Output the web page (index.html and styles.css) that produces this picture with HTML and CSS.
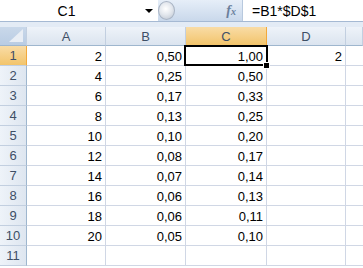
FILE: index.html
```html
<!DOCTYPE html>
<html lang="en">

<head>
    <meta charset="UTF-8">
    <title>Sheet</title>
    <link rel="stylesheet" href="styles.css">
</head>

<body>
    <div class="app">
        <div class="fbar">
            <div class="namebox">
                <span class="name">C1</span>
                <span class="arrow"></span>
            </div>
            <div class="fxzone">
                <span class="bead"></span>
                <span class="fx">f<small>x</small></span>
            </div>
            <div class="formula">=B1*$D$1</div>
        </div>
        <div class="gap"></div>
        <div class="grid">
            <div class="hd corner"><span class="tri"></span></div>
            <div class="hd">A</div>
            <div class="hd">B</div>
            <div class="hd sel">C</div>
            <div class="hd">D</div>
            <div class="hd last"></div>

            <div class="rh sel">1</div>
            <div class="c">2</div>
            <div class="c">0,50</div>
            <div class="c active">1,00<span class="frame"></span><span class="handle"></span></div>
            <div class="c">2</div>
            <div class="c last"></div>

            <div class="rh">2</div><div class="c">4</div><div class="c">0,25</div><div class="c">0,50</div><div class="c"></div><div class="c last"></div>
            <div class="rh">3</div><div class="c">6</div><div class="c">0,17</div><div class="c">0,33</div><div class="c"></div><div class="c last"></div>
            <div class="rh">4</div><div class="c">8</div><div class="c">0,13</div><div class="c">0,25</div><div class="c"></div><div class="c last"></div>
            <div class="rh">5</div><div class="c">10</div><div class="c">0,10</div><div class="c">0,20</div><div class="c"></div><div class="c last"></div>
            <div class="rh">6</div><div class="c">12</div><div class="c">0,08</div><div class="c">0,17</div><div class="c"></div><div class="c last"></div>
            <div class="rh">7</div><div class="c">14</div><div class="c">0,07</div><div class="c">0,14</div><div class="c"></div><div class="c last"></div>
            <div class="rh">8</div><div class="c">16</div><div class="c">0,06</div><div class="c">0,13</div><div class="c"></div><div class="c last"></div>
            <div class="rh">9</div><div class="c">18</div><div class="c">0,06</div><div class="c">0,11</div><div class="c"></div><div class="c last"></div>
            <div class="rh">10</div><div class="c">20</div><div class="c">0,05</div><div class="c">0,10</div><div class="c"></div><div class="c last"></div>
            <div class="rh">11</div><div class="c"></div><div class="c"></div><div class="c"></div><div class="c"></div><div class="c last"></div>
        </div>
    </div>
</body>

</html>
```

FILE: styles.css
```css
body {
    margin: 0;
    background-color: #ffffff;
    font-family: "Liberation Sans", Arial, sans-serif;
    font-size: 13px;
    color: #000000;
}

.app {
    width: 363px;
    height: 268px;
    overflow: hidden;
    background-color: #ffffff;
}

/* formula bar */
.fbar {
    height: 21px;
    display: flex;
    border-bottom: 1px solid #a5b9d3;
    background-color: #ffffff;
}

.namebox {
    width: 158px;
    display: flex;
    align-items: center;
    position: relative;
}

.name {
    flex: 1;
    text-align: center;
    font-size: 14px;
    padding-right: 12px;
}

.arrow {
    width: 0;
    height: 0;
    border-left: 4px solid transparent;
    border-right: 4px solid transparent;
    border-top: 4px solid #000000;
    margin-right: 5px;
    margin-top: 1px;
}

.fxzone {
    width: 84px;
    position: relative;
    background: linear-gradient(to bottom, #e6eef8, #c9d8eb);
    border-right: 1px solid #b8c9de;
    display: flex;
    align-items: center;
    justify-content: flex-end;
}

.bead {
    position: absolute;
    left: 0;
    top: 1px;
    width: 17px;
    height: 19px;
    border-radius: 50%;
    background: radial-gradient(circle at 45% 40%, #ffffff 0%, #e4e8ee 45%, #b9c2cf 100%);
    border: 1px solid #a9b4c4;
    box-sizing: border-box;
}

.fx {
    font-family: "Liberation Serif", serif;
    font-style: italic;
    font-weight: bold;
    font-size: 14px;
    color: #6b7f9c;
    margin-right: 6px;
}

.fx small {
    font-size: 10px;
}

.formula {
    flex: 1;
    display: flex;
    align-items: center;
    padding-left: 9px;
    font-size: 14px;
}

.gap {
    height: 5px;
    background-color: #e3ebf5;
}

/* sheet */
.grid {
    display: grid;
    grid-template-columns: 27px 79px 80px 81px 79px 1fr;
    grid-template-rows: 19px repeat(11, 20px);
}

.hd {
    box-sizing: border-box;
    background: linear-gradient(to bottom, #eef3f9, #dbe4ef);
    border-right: 1px solid #c2cfe0;
    border-bottom: 1px solid #9eb6ce;
    color: #3e4f66;
    display: flex;
    align-items: center;
    justify-content: center;
    font-size: 13px;
}

.hd.sel {
    background: linear-gradient(to bottom, #f9dca6, #f2c46b);
    border-right-color: #f2a93c;
    border-bottom-color: #f2a93c;
}

.corner {
    background: linear-gradient(to bottom, #c9d8ea, #b9cce3);
    position: relative;
}

.tri {
    position: absolute;
    right: 3px;
    bottom: 3px;
    width: 0;
    height: 0;
    border-left: 14px solid transparent;
    border-bottom: 13px solid #e9eef5;
}

.rh {
    box-sizing: border-box;
    background: linear-gradient(to right, #eef3f9, #dee6f0);
    border-right: 1px solid #9eb6ce;
    border-bottom: 1px solid #c2cfe0;
    color: #3e4f66;
    display: flex;
    align-items: center;
    justify-content: center;
    font-size: 13px;
}

.rh.sel {
    background: linear-gradient(to bottom, #f9dca6, #f2c46b);
    border-right-color: #f2a93c;
}

.c {
    box-sizing: border-box;
    border-right: 1px solid #d0d7e5;
    border-bottom: 1px solid #d0d7e5;
    display: flex;
    align-items: center;
    justify-content: flex-end;
    padding-right: 3px;
    padding-top: 2px;
}

.c.last {
    border-right: none;
}

.active {
    position: relative;
}

.frame {
    position: absolute;
    left: -2px;
    top: -1px;
    right: -2px;
    bottom: -1px;
    border: 2px solid #000000;
}

.handle {
    position: absolute;
    right: -4px;
    bottom: -4px;
    width: 5px;
    height: 5px;
    background-color: #000000;
    border: 1px solid #ffffff;
}
```
